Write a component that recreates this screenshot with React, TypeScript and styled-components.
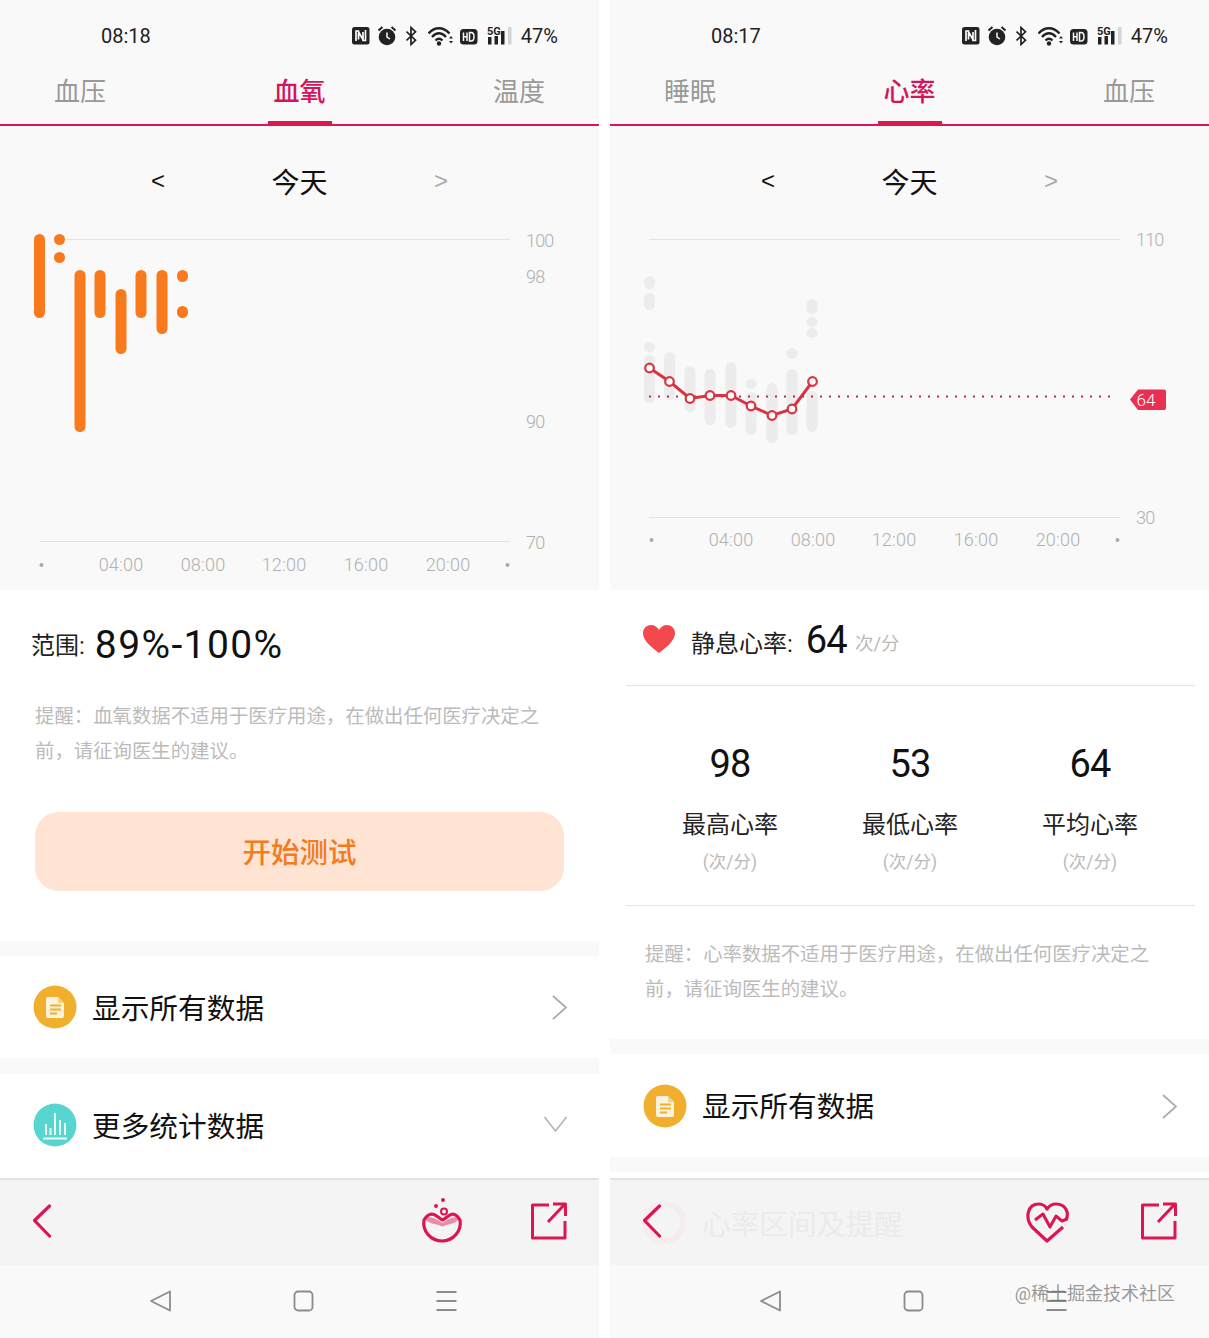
import React from "react";
import styled, { createGlobalStyle } from "styled-components";

const ACCENT = "#dc1650";

const Global = createGlobalStyle`
  html, body { margin: 0; padding: 0; background: #fff; }
  body { font-family: Roboto, "Noto Sans CJK SC", sans-serif; }
`;

const Page = styled.div`
  display: flex;
  gap: 11px;
  width: 1209px;
  height: 1338px;
  overflow: hidden;
  background: #fff;
`;
const Phone = styled.div`
  position: relative;
  width: 599px;
  height: 1338px;
  display: flex;
  flex-direction: column;
  background: #fff;
  flex: none;
  & > * { flex: none; }
`;
const StatusBar = styled.div`
  height: 70px;
  box-sizing: border-box;
  background: #f9f9f9;
  display: flex;
  align-items: center;
  justify-content: space-between;
  padding: 2px 41px 0 101px;
  color: #222;
  font-size: 20px;
`;
const StatusRight = styled.div`
  display: flex;
  align-items: center;
`;
const StatusIcon = styled.svg`
  display: block;
  height: 20px;
  flex: none;
`;
const Tabs = styled.div`
  height: 54px;
  padding: 0 48px;
  background: #f9f9f9;
  display: flex;
  justify-content: space-between;
  border-bottom: 2px solid ${ACCENT};
`;
const Tab = styled.div<{ $active?: boolean }>`
  position: relative;
  width: 64px;
  text-align: center;
  font-size: 26px;
  line-height: 44px;
  color: ${(p) => (p.$active ? "#d5155b" : "#999")};
  font-weight: ${(p) => (p.$active ? 500 : 400)};
  &::after {
    content: "";
    display: ${(p) => (p.$active ? "block" : "none")};
    position: absolute;
    left: 0;
    right: 0;
    bottom: 0;
    height: 3px;
    background: ${ACCENT};
  }
`;
const ChartPanel = styled.div`
  background: #f9f9f9;
  height: 464px;
  display: flex;
  flex-direction: column;
`;
const DateNav = styled.div`
  height: 95px;
  padding: 15px 87px 0;
  box-sizing: border-box;
  display: flex;
  align-items: center;
`;
const DateArrow = styled.div<{ $muted?: boolean }>`
  width: 142px;
  text-align: center;
  font-size: 24px;
  font-family: "Liberation Sans", sans-serif;
  color: ${(p) => (p.$muted ? "#aaa" : "#111")};
`;
const DateTitle = styled.div`
  width: 141px;
  text-align: center;
  font-size: 28px;
  font-weight: 400;
  color: #111;
`;
const ChartSvg = styled.svg`
  display: block;
  width: 599px;
  height: 369px;
`;
const AxisText = styled.text`
  font-family: Roboto, sans-serif;
  font-size: 18px;
  font-weight: 300;
  letter-spacing: 0.2px;
  fill: #b0b0b0;
`;
const ScaleText = styled(AxisText)`
  letter-spacing: -0.8px;
`;
const RangeSection = styled.div`
  height: 351px;
  box-sizing: border-box;
  padding: 33px 35px 0;
`;
const RangeRow = styled.div`
  display: flex;
  align-items: center;
  height: 44px;
  margin-left: -4px;
`;
const RangeLabel = styled.span`
  font-size: 24px;
  color: #222;
  font-weight: 400;
  margin-right: 10px;
  margin-bottom: 4px;
  white-space: nowrap;
`;
const RangeValue = styled.span`
  font-size: 39px;
  font-weight: 400;
  letter-spacing: 1.4px;
  color: #111;
  white-space: nowrap;
`;
const Note = styled.p<{ $top: number }>`
  margin: ${(p) => p.$top}px 0 0;
  font-size: 19.4px;
  line-height: 35px;
  color: #bbb;
  font-weight: 400;
  width: 530px;
`;
const StartButton = styled.button`
  display: block;
  width: 529px;
  height: 79px;
  margin-top: 43px;
  padding: 0 0 2px;
  border: none;
  border-radius: 24px;
  background: #ffe3d3;
  color: #f47b20;
  font-family: inherit;
  font-size: 28.5px;
  font-weight: 500;
`;
const Gap = styled.div<{ $h: number }>`
  height: ${(p) => p.$h}px;
  background: #f9f9f9;
`;
const ListRow = styled.div<{ $h: number; $pb?: number }>`
  height: ${(p) => p.$h}px;
  box-sizing: border-box;
  display: flex;
  align-items: center;
  padding: 0 32px ${(p) => p.$pb ?? 0}px 33px;
  font-size: 28.7px;
  font-weight: 400;
  color: #111;
  background: #fff;
`;
const RowIcon = styled.svg`
  display: block;
  width: 44px;
  height: 44px;
  flex: none;
  margin-right: 15px;
`;
const RowLabel = styled.span`
  flex: 1;
  padding-bottom: 2px;
`;
const RowChevron = styled.svg`
  display: block;
  width: 24px;
  height: 26px;
  flex: none;
`;
const RestRow = styled.div`
  height: 96px;
  box-sizing: border-box;
  margin: 0 14px 0 16px;
  padding: 8px 0 0 16px;
  border-bottom: 1px solid #e6e6e6;
  display: flex;
  align-items: center;
`;
const HeartIcon = styled.svg`
  display: block;
  width: 34px;
  height: 30px;
  margin-right: 15px;
  margin-bottom: 6px;
`;
const RestLabel = styled.span`
  font-size: 24px;
  font-weight: 400;
  color: #222;
  margin-right: 13px;
`;
const RestValue = styled.span`
  font-size: 38px;
  font-weight: 400;
  letter-spacing: -0.8px;
  color: #111;
  margin-right: 8px;
  position: relative;
  top: -2px;
`;
const RestUnit = styled.span`
  font-size: 18.5px;
  font-weight: 400;
  color: #bbb;
`;
const Stats = styled.div`
  height: 220px;
  box-sizing: border-box;
  margin: 0 14px 0 16px;
  padding: 51px 14px 0;
  border-bottom: 1px solid #e6e6e6;
  display: grid;
  grid-template-columns: repeat(3, 180px);
`;
const Stat = styled.div`
  display: flex;
  flex-direction: column;
  align-items: center;
`;
const StatValue = styled.div`
  font-size: 38px;
  font-weight: 400;
  letter-spacing: -0.8px;
  line-height: 54px;
  color: #111;
`;
const StatLabel = styled.div`
  margin-top: 16px;
  font-size: 24px;
  line-height: 36px;
  font-weight: 400;
  color: #222;
`;
const StatUnit = styled.div`
  margin-top: 4px;
  font-size: 17.5px;
  line-height: 30px;
  font-weight: 400;
  color: #bbb;
`;
const NoteSection = styled.div`
  height: 133px;
  box-sizing: border-box;
  padding: 30px 35px 0;
`;
const Spacer = styled.div<{ $h: number }>`
  height: ${(p) => p.$h}px;
`;
const Toolbar = styled.div`
  position: relative;
  height: 85px;
  box-sizing: content-box;
  border-top: 2px solid #e2e2e2;
  background: #f4f4f4;
  display: flex;
  align-items: center;
  padding: 0 32px 0 33px;
`;
const ToolbarRow = styled.div`
  display: flex;
  align-items: center;
  width: 100%;
  margin-bottom: 3px;
`;
const BackIcon = styled.svg`
  position: relative;
  display: block;
  width: 20px;
  height: 34px;
  margin-right: auto;
`;
const ToolIcon = styled.svg<{ $mr: number }>`
  display: block;
  width: 44px;
  height: 48px;
  margin-right: ${(p) => p.$mr}px;
`;
const ShareIcon = styled.svg`
  display: block;
  width: 36px;
  height: 38px;
`;
const Ghost = styled.div`
  position: absolute;
  left: 33px;
  top: 21px;
  display: flex;
  align-items: center;
  font-size: 28.7px;
  font-weight: 400;
  color: #ebebeb;
`;
const GhostCircle = styled.div`
  width: 43px;
  height: 43px;
  box-sizing: border-box;
  border-radius: 50%;
  border: 6px solid #f5ecee;
  margin-right: 16px;
`;
const BottomNav = styled.div`
  height: 73px;
  background: #f9f9f9;
  display: flex;
  align-items: center;
  justify-content: center;
  gap: 120px;
  padding: 0 0 2px 7px;
  box-sizing: border-box;
`;
const NavIcon = styled.svg`
  display: block;
  width: 23px;
  height: 24px;
  stroke: #8c8c8c;
  fill: none;
  stroke-width: 1.8;
`;
const Watermark = styled.div`
  position: absolute;
  right: 34px;
  top: 1282px;
  font-size: 18px;
  line-height: 24px;
  font-weight: 400;
  color: rgba(110, 110, 110, 0.7);
  white-space: nowrap;
`;

type Bar = [number, number, number];

const Bars = ({ data, color }: { data: Bar[]; color: string }) => (
  <g>
    {data.map(([x, a, b], i) => (
      <rect key={i} x={x - 5.5} y={a} width={11} height={b - a} rx={5.5} fill={color} />
    ))}
  </g>
);

const spoBars: Bar[] = [
  [39.5, 234, 318], [59.5, 234, 245], [59.5, 252, 263], [80, 270, 432],
  [100, 270, 318], [121, 289, 354], [141, 270, 318], [162, 270, 334],
  [182.5, 270, 282], [182.5, 306, 318],
];

const OxygenChart = () => (
  <ChartSvg viewBox="0 221 599 369">
    <line x1="60" x2="510" y1="239.5" y2="239.5" stroke="#e4e4e4" />
    <line x1="40" x2="510" y1="541.5" y2="541.5" stroke="#e4e4e4" />
    <Bars data={spoBars} color="#f97a1c" />
    <ScaleText x="526" y="247">100</ScaleText>
    <ScaleText x="526" y="283">98</ScaleText>
    <ScaleText x="526" y="428">90</ScaleText>
    <ScaleText x="526" y="549">70</ScaleText>
    {[[121, "04:00"], [203, "08:00"], [284, "12:00"], [366, "16:00"], [448, "20:00"]].map(([x, t]) => (
      <AxisText key={t} x={x} y="571" textAnchor="middle">{t}</AxisText>
    ))}
    <circle cx="41.5" cy="565" r="2" fill="#aaa" />
    <circle cx="507.5" cy="565" r="2" fill="#aaa" />
  </ChartSvg>
);

const hrBars: Bar[] = [
  [649.5, 276, 289], [649.5, 293, 310], [649.5, 342, 352], [649.5, 355, 403],
  [669.5, 352, 400], [690, 366, 412], [710, 369, 425], [731, 362, 428],
  [751, 379, 389], [751, 392, 435], [772, 383, 443], [792, 348, 359],
  [792, 369, 435], [812, 299, 314], [812, 317, 327], [812, 328, 338], [812, 391, 432],
];
const hrPts: [number, number][] = [
  [649.5, 368], [669.5, 381.5], [690, 398.5], [710, 395.5], [731, 395.5],
  [751, 406], [772, 415.5], [792, 409], [812.5, 381.5],
];

const HeartChart = () => (
  <ChartSvg viewBox="610 221 599 369">
    <line x1="649" x2="1120" y1="239.5" y2="239.5" stroke="#e4e4e4" />
    <line x1="649" x2="1120" y1="517.5" y2="517.5" stroke="#e4e4e4" />
    <Bars data={hrBars} color="#ececec" />
    <line x1="649" x2="1113" y1="396.5" y2="396.5" stroke="#b0304a" strokeWidth="2" strokeDasharray="2 7" />
    <polyline points={hrPts.map((p) => p.join(",")).join(" ")} fill="none" stroke="#d8333f" strokeWidth="3" />
    {hrPts.map(([x, y], i) => (
      <circle key={i} cx={x} cy={y} r="4.3" fill="#fff" stroke="#d8333f" strokeWidth="2.2" />
    ))}
    <path d="M1138 389.5H1164a2 2 0 0 1 2 2V408a2 2 0 0 1-2 2H1138L1130 399.5Z" fill="#ea2f52" />
    <text x="1146" y="406" textAnchor="middle" fontFamily="Roboto, sans-serif" fontSize="17" fontWeight="300" fill="#fff">64</text>
    <ScaleText x="1136" y="246">110</ScaleText>
    <ScaleText x="1136" y="524">30</ScaleText>
    {[[731, "04:00"], [813, "08:00"], [894, "12:00"], [976, "16:00"], [1058, "20:00"]].map(([x, t]) => (
      <AxisText key={t} x={x} y="546" textAnchor="middle">{t}</AxisText>
    ))}
    <circle cx="651.5" cy="540" r="2" fill="#aaa" />
    <circle cx="1117.5" cy="540" r="2" fill="#aaa" />
  </ChartSvg>
);

const Status = ({ time }: { time: string }) => (
  <StatusBar>
    <span>{time}</span>
    <StatusRight>
      <StatusIcon width="26" viewBox="0 0 26 20">
        <rect x="0" y="1" width="17.500" height="17.500" rx="2.500" fill="#222" />
        <path d="M4 15V5H6.500V13.500M13.500 4V14.500H11V6M6 5L11.500 14.500" fill="none" stroke="#fafafa" strokeWidth="1.700" />
      </StatusIcon>
      <StatusIcon width="28" viewBox="0 0 28 20">
        <circle cx="9" cy="11" r="8.300" fill="#222" />
        <path d="M9 6.500V11L12 13" fill="none" stroke="#fafafa" strokeWidth="1.500" />
        <path d="M0.500 4.500L4.500 1M17.500 4.500L13.500 1" stroke="#222" strokeWidth="2" />
      </StatusIcon>
      <StatusIcon width="22" viewBox="0 0 22 20">
        <path d="M0.500 5.500L9.500 14.200L5 18.500V1.500L9.500 5.800L0.500 14.500" fill="none" stroke="#222" strokeWidth="1.700" />
      </StatusIcon>
      <StatusIcon width="32" viewBox="0 0 32 20">
        <path d="M0.500 7.500C6.500 0.500 15.500 0.500 21.500 7.500M4 11C8.500 6 13.500 6 18 11M7.500 14.500C10 12 12 12 14.500 14.500" fill="none" stroke="#222" strokeWidth="2.400" />
        <circle cx="11" cy="17.500" r="2.200" fill="#222" />
        <path d="M21 12.500L23 10L25 12.500ZM21 15L23 17.500L25 15Z" fill="#222" />
      </StatusIcon>
      <StatusIcon width="27" viewBox="0 0 27 20">
        <rect x="0" y="3" width="17.500" height="15.500" rx="3.500" fill="#222" />
        <path d="M3.500 6.500V15M7 6.500V15M3.500 10.700H7M9.500 6.500V15H11C15 15 15 6.500 11 6.500Z" fill="none" stroke="#fafafa" strokeWidth="1.500" />
      </StatusIcon>
      <StatusIcon width="34" viewBox="0 0 34 20">
        <text x="0" y="8.500" fontFamily="Roboto, sans-serif" fontSize="11" fontWeight="700" fill="#222">5G</text>
        <rect x="1" y="11" width="3.500" height="7.500" fill="#222" />
        <rect x="7.500" y="10" width="3.500" height="8.500" fill="#222" />
        <rect x="14" y="5" width="3.500" height="13.500" fill="#222" />
        <rect x="21" y="1" width="3.500" height="17.500" fill="#d4d4d4" />
      </StatusIcon>
      <span>47%</span>
    </StatusRight>
  </StatusBar>
);

const TabBar = ({ items }: { items: string[] }) => (
  <Tabs>
    {items.map((t, i) => (
      <Tab key={t} $active={i === 1}>{t}</Tab>
    ))}
  </Tabs>
);

const Chart = ({ children }: { children: React.ReactNode }) => (
  <ChartPanel>
    <DateNav>
      <DateArrow>&lt;</DateArrow>
      <DateTitle>今天</DateTitle>
      <DateArrow $muted>&gt;</DateArrow>
    </DateNav>
    {children}
  </ChartPanel>
);

const DocIcon = () => (
  <RowIcon viewBox="0 0 44 44">
    <circle cx="22" cy="22" r="21.500" fill="#f0b02e" />
    <path d="M13 14a2 2 0 0 1 2-2H25L31 18V31a2 2 0 0 1-2 2H15a2 2 0 0 1-2-2Z" fill="#fdf3dd" />
    <path d="M25 12V18H31Z" fill="#f6cf85" />
    <path d="M17 20.500H28M17 24.500H28M17 28.500H24" stroke="#f0b02e" strokeWidth="1.800" />
  </RowIcon>
);
const StatIcon = () => (
  <RowIcon viewBox="0 0 44 44">
    <circle cx="22" cy="22" r="21.500" fill="#57d6cf" />
    <path d="M13 21V32M17.500 25V32M22 10V32M27 17V32M32 20V32M10 35.500H34" stroke="#e9fbfa" strokeWidth="2" fill="none" />
  </RowIcon>
);
const ChevronRight = () => (
  <RowChevron viewBox="0 0 24 26">
    <path d="M10 2L23 13.500L10 25" fill="none" stroke="#aaa" strokeWidth="1.700" />
  </RowChevron>
);
const ChevronDown = () => (
  <RowChevron viewBox="0 0 24 26">
    <path d="M1.500 5L12.500 19L23.500 5" fill="none" stroke="#b4b4b4" strokeWidth="1.600" />
  </RowChevron>
);

const Back = () => (
  <BackIcon viewBox="0 0 20 34">
    <path d="M16.500 2L1.500 16.500L16.500 32" fill="none" stroke={ACCENT} strokeWidth="3.200" strokeLinecap="round" strokeLinejoin="round" />
  </BackIcon>
);
const Share = () => (
  <ShareIcon viewBox="0 0 36 38">
    <path d="M18 3H1.500V36H34V19M17 20L33 3M22 2H34.500V14" fill="none" stroke={ACCENT} strokeWidth="3" strokeLinejoin="round" />
  </ShareIcon>
);
const CupIcon = () => (
  <ToolIcon $mr={67} viewBox="0 0 44 48">
    <circle cx="23" cy="3" r="2" fill={ACCENT} />
    <circle cx="16" cy="9" r="2" fill={ACCENT} />
    <circle cx="24" cy="14.500" r="3" fill="none" stroke={ACCENT} strokeWidth="2" />
    <path d="M5 22C9 18 16 22 22.500 26C29 22 35 18 39 22C35 27 28 27 22.500 29.500C17 27 9 27 5 22Z" fill="#ee8aa6" />
    <path d="M4 23C7 18 11 16.500 14 17.500C17 18.500 20 22 22.500 23C25 22 28 18.500 31 17.500C34 16.500 37 18 40 23C42 34 33 44 22 44C11 44 2 34 4 23Z" fill="none" stroke={ACCENT} strokeWidth="3.200" strokeLinejoin="round" />
  </ToolIcon>
);
const HeartBeatIcon = () => (
  <ToolIcon $mr={72} viewBox="0 0 44 48">
    <path d="M38 30L22 44L7 30C0 21 2 7 14 7C18 7 21 10 22 12C24 9 27 7 31 7C42 7 44 17 41 23" fill="none" stroke={ACCENT} strokeWidth="3.200" strokeLinejoin="round" />
    <path d="M10 23L18 17L25 30L31 19L37 24L42 22" fill="none" stroke={ACCENT} strokeWidth="3" strokeLinejoin="round" />
  </ToolIcon>
);

const Nav = () => (
  <BottomNav>
    <NavIcon viewBox="0 0 23 24">
      <path d="M21 2.500V21.500L2 12Z" strokeLinejoin="round" />
    </NavIcon>
    <NavIcon viewBox="0 0 23 24">
      <rect x="2.500" y="2.500" width="18" height="19" rx="3.500" />
    </NavIcon>
    <NavIcon viewBox="0 0 23 24">
      <path d="M1.500 3H21.500M1.500 12H21.500M1.500 21H21.500" />
    </NavIcon>
  </BottomNav>
);

const OxygenPhone = () => (
  <Phone>
    <Status time="08:18" />
    <TabBar items={["血压", "血氧", "温度"]} />
    <Chart><OxygenChart /></Chart>
    <RangeSection>
      <RangeRow>
        <RangeLabel>范围:</RangeLabel>
        <RangeValue>89%-100%</RangeValue>
      </RangeRow>
      <Note $top={32}>提醒：血氧数据不适用于医疗用途，在做出任何医疗决定之前，请征询医生的建议。</Note>
      <StartButton>开始测试</StartButton>
    </RangeSection>
    <Gap $h={15} />
    <ListRow $h={102}>
      <DocIcon />
      <RowLabel>显示所有数据</RowLabel>
      <ChevronRight />
    </ListRow>
    <Gap $h={16} />
    <ListRow $h={104} $pb={2}>
      <StatIcon />
      <RowLabel>更多统计数据</RowLabel>
      <ChevronDown />
    </ListRow>
    <Toolbar>
      <ToolbarRow>
        <Back />
        <CupIcon />
        <Share />
      </ToolbarRow>
    </Toolbar>
    <Nav />
  </Phone>
);

const stats = [
  ["98", "最高心率"],
  ["53", "最低心率"],
  ["64", "平均心率"],
];

const HeartPhone = () => (
  <Phone>
    <Status time="08:17" />
    <TabBar items={["睡眠", "心率", "血压"]} />
    <Chart><HeartChart /></Chart>
    <RestRow>
      <HeartIcon viewBox="0 0 34 30">
        <path d="M17 29C6 21 1 15 1 9C1 4 5 1 9 1C12.500 1 15.500 3 17 6C18.500 3 21.500 1 25 1C29 1 33 4 33 9C33 15 28 21 17 29Z" fill="#f5484d" />
      </HeartIcon>
      <RestLabel>静息心率:</RestLabel>
      <RestValue>64</RestValue>
      <RestUnit>次/分</RestUnit>
    </RestRow>
    <Stats>
      {stats.map(([v, l]) => (
        <Stat key={l}>
          <StatValue>{v}</StatValue>
          <StatLabel>{l}</StatLabel>
          <StatUnit>(次/分)</StatUnit>
        </Stat>
      ))}
    </Stats>
    <NoteSection>
      <Note $top={1}>提醒：心率数据不适用于医疗用途，在做出任何医疗决定之前，请征询医生的建议。</Note>
    </NoteSection>
    <Gap $h={15} />
    <ListRow $h={103}>
      <DocIcon />
      <RowLabel>显示所有数据</RowLabel>
      <ChevronRight />
    </ListRow>
    <Gap $h={15} />
    <Spacer $h={6} />
    <Toolbar>
      <Ghost>
        <GhostCircle />
        心率区间及提醒
      </Ghost>
      <ToolbarRow>
        <Back />
        <HeartBeatIcon />
        <Share />
      </ToolbarRow>
    </Toolbar>
    <Nav />
    <Watermark>@稀土掘金技术社区</Watermark>
  </Phone>
);

export default function App() {
  return (
    <>
      <Global />
      <Page>
        <OxygenPhone />
        <HeartPhone />
      </Page>
    </>
  );
}
